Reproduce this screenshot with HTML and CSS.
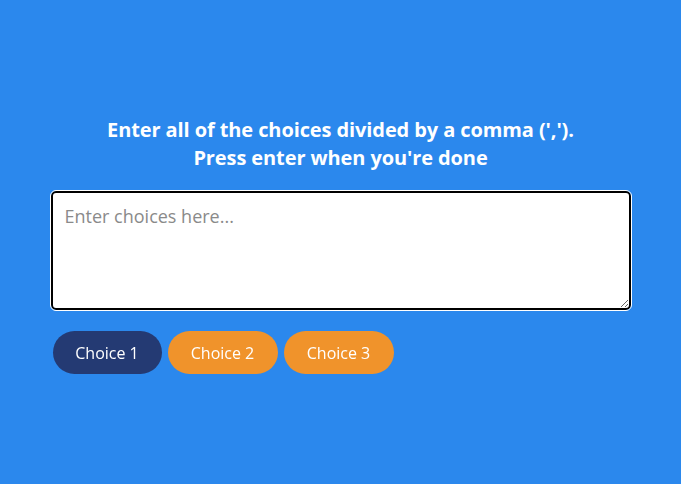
FILE: index.html
```html
<!DOCTYPE html>
<html>
<head>
<meta charset="utf-8">
<link rel="stylesheet" href="styles.css">
</head>
<body>
<main class="page">
  <section class="panel">
    <h1 class="title">Enter all of the choices divided by a comma (',').<br>Press enter when you're done</h1>
    <textarea class="choices" placeholder="Enter choices here..." autofocus></textarea>
    <div class="tags">
      <span class="tag tag-active">Choice 1</span>
      <span class="tag">Choice 2</span>
      <span class="tag">Choice 3</span>
    </div>
  </section>
</main>
</body>
</html>
```
FILE: styles.css
```css
html, body {
  margin: 0;
  padding: 0;
  height: 100%;
}
body {
  background: #2b88ed;
  font-family: "Open Sans", "Noto Sans", sans-serif;
}
.page {
  height: 100%;
  display: flex;
  align-items: flex-start;
  justify-content: center;
}
.panel {
  width: 580px;
  padding-top: 116px;
  display: flex;
  flex-direction: column;
}
.title {
  margin: 0 0 19px;
  color: #ffffff;
  font-size: 20px;
  font-weight: 700;
  line-height: 28px;
  text-align: center;
  letter-spacing: -0.1px;
}
.choices {
  box-sizing: border-box;
  width: 580px;
  height: 119px;
  margin: 0;
  padding: 10px 12px;
  border: 2px solid #000;
  border-radius: 5px;
  outline: 1px solid #ffffff;
  outline-offset: 0;
  background: #fff;
  font-family: "Open Sans", "Noto Sans", sans-serif;
  font-size: 18px;
  line-height: 26px;
  color: #333;
  resize: vertical;
}
.choices::placeholder {
  color: #8a8a8a;
}
.tags {
  display: flex;
  gap: 6px;
  margin-top: 21px;
  padding-left: 2px;
}
.tag {
  display: inline-flex;
  align-items: center;
  justify-content: center;
  width: 110px;
  height: 43px;
  border-radius: 22px;
  background: #f0932b;
  color: #ffffff;
  font-family: "Open Sans", "Noto Sans", sans-serif;
  font-size: 16px;
}
.tag-active {
  width: 109px;
  background: #243a73;
}
```
